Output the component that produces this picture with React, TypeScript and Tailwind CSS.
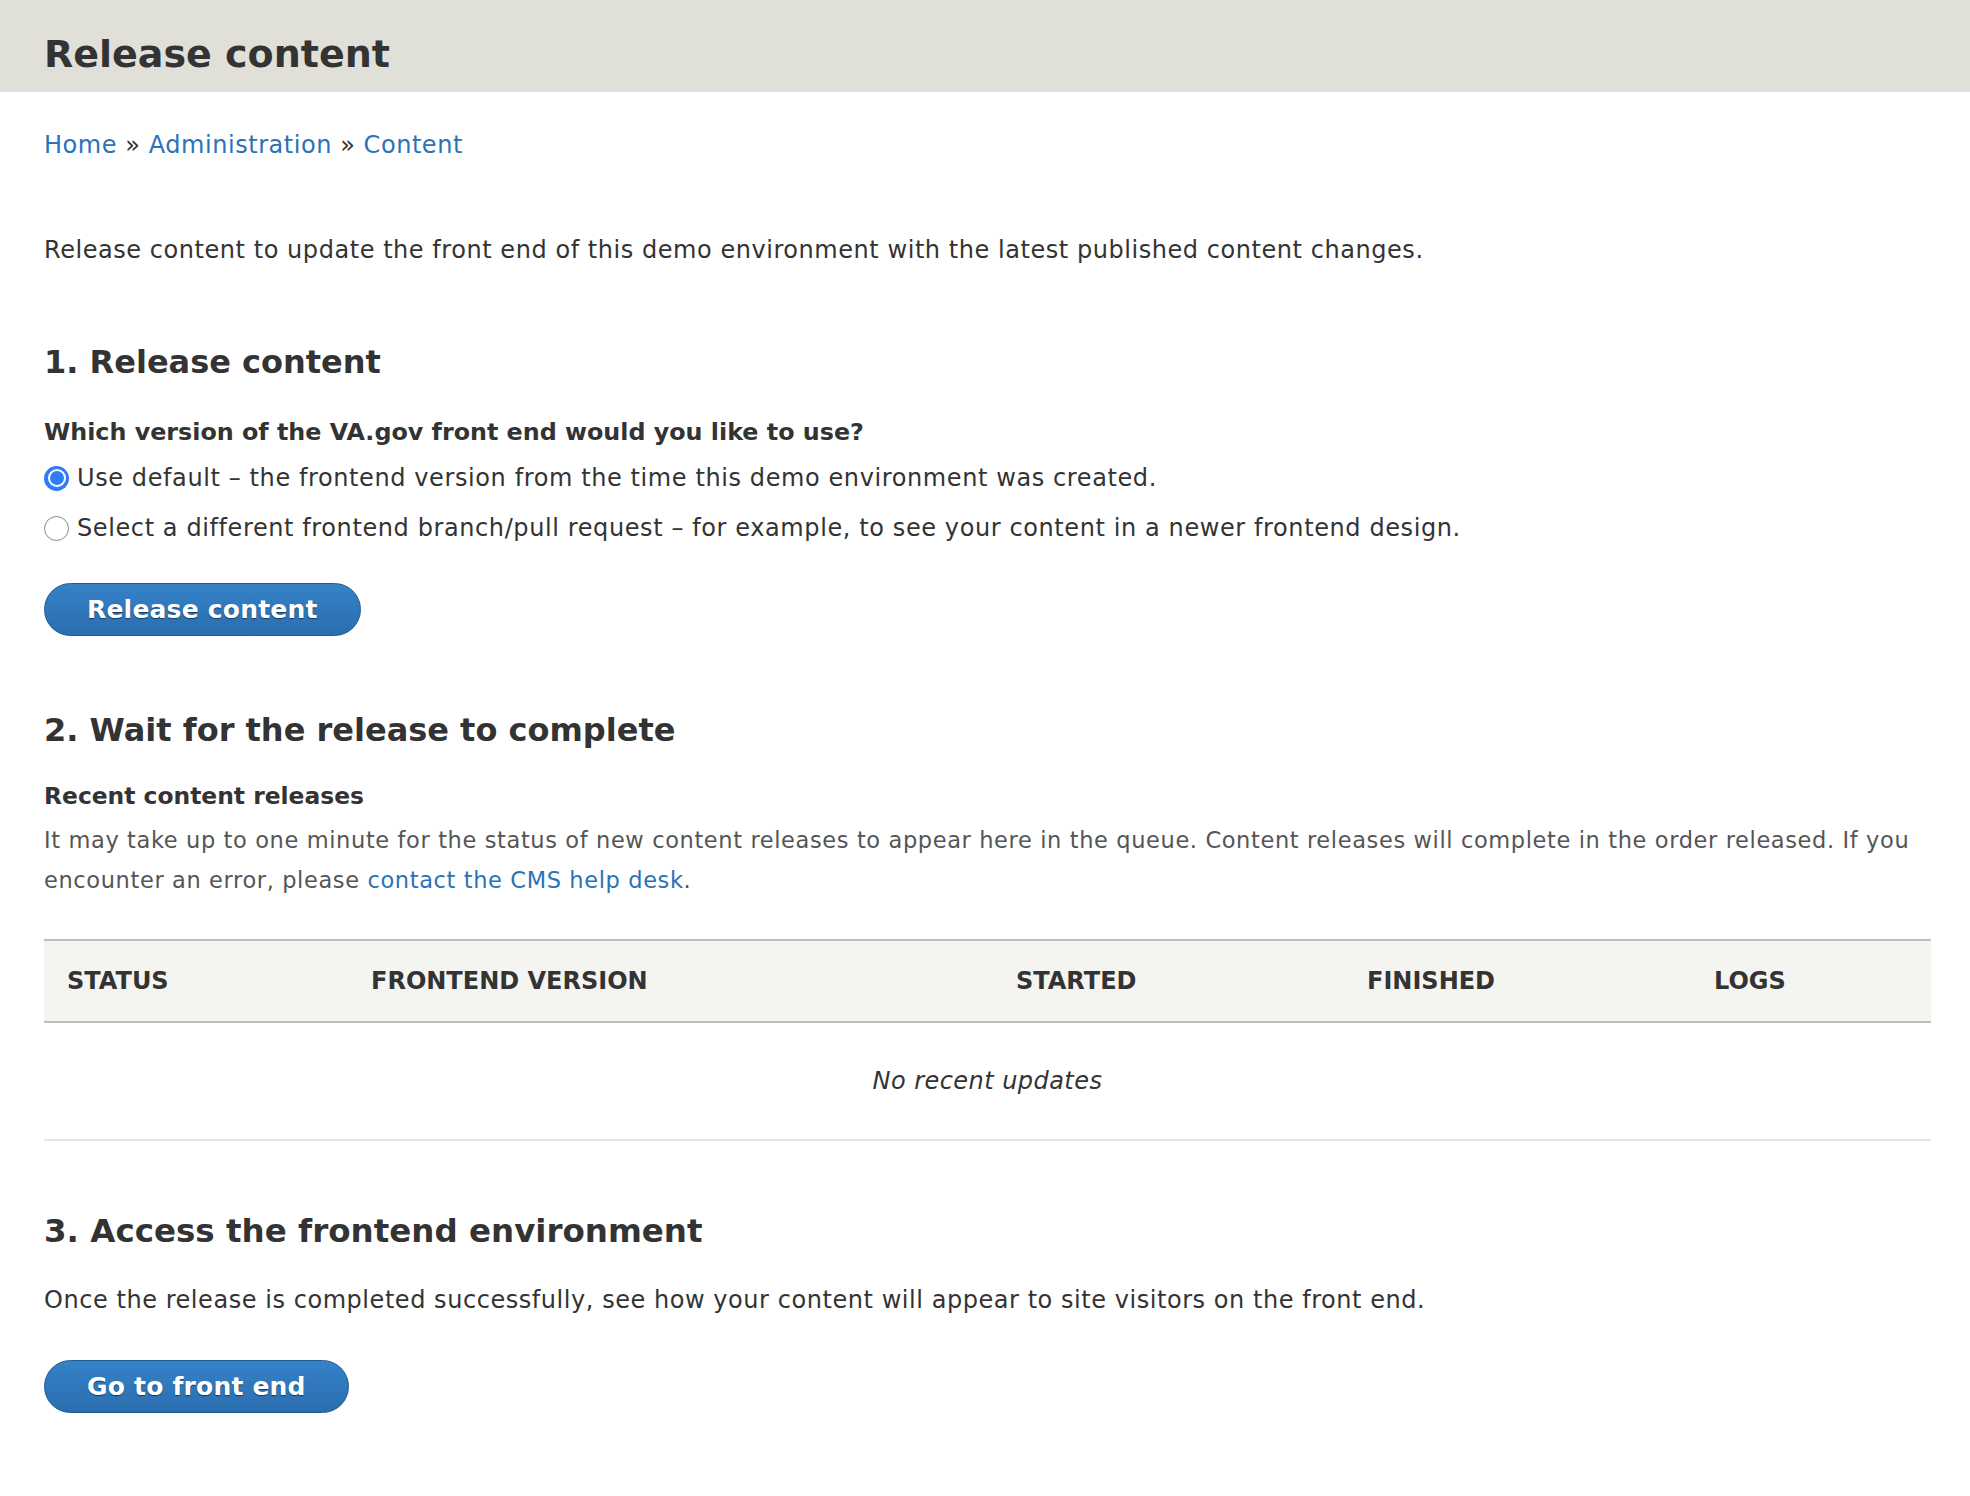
import React from "react";

const columns = [
  { label: "Status", width: "w-[304px]" },
  { label: "Frontend version", width: "w-[645px]" },
  { label: "Started", width: "w-[351px]" },
  { label: "Finished", width: "w-[347px]" },
  { label: "Logs", width: "" },
];

const Radio = ({ checked }: { checked: boolean }) =>
  checked ? (
    <span className="flex h-[25px] w-[25px] shrink-0 items-center justify-center rounded-full bg-[#2f7cf6]">
      <span className="flex h-[18px] w-[18px] items-center justify-center rounded-full bg-white">
        <span className="h-[14px] w-[14px] rounded-full bg-[#2f7cf6]" />
      </span>
    </span>
  ) : (
    <span className="h-[25px] w-[25px] shrink-0 rounded-full border-[1.5px] border-[#8a8a8a] bg-white" />
  );

const PrimaryButton = ({ children }: { children: React.ReactNode }) => (
  <button className="h-[53px] rounded-full border border-[#1e5c90] bg-gradient-to-b from-[#3482c7] to-[#2b6eaf] px-[42px] text-[25px] font-bold leading-none tracking-[0.2px] text-white [text-shadow:0_1px_1px_rgba(0,0,0,0.5)]">
    {children}
  </button>
);

export default function App() {
  return (
    <div className="min-h-[1496px] bg-white font-['DejaVu_Sans',sans-serif] text-[#333]">
      {/* page header */}
      <header className="h-[92px] bg-[#e0e0d8] pl-[44px] pt-[35px]">
        <h1 className="text-[38px] font-bold leading-[38px] text-[#333]">Release content</h1>
      </header>

      <main className="pl-[44px] pr-[39px]">
        {/* breadcrumb */}
        <nav className="mt-[35px] text-[24px] leading-[36px] tracking-[0.55px]">
          <a className="text-[#2a72ba]">Home</a> » <a className="text-[#2a72ba]">Administration</a> »{" "}
          <a className="text-[#2a72ba]">Content</a>
        </nav>

        <p className="mt-[69px] text-[24px] leading-[36px] tracking-[0.55px]">
          Release content to update the front end of this demo environment with the latest published content changes.
        </p>

        {/* step 1 */}
        <h2 className="mt-[74px] text-[32px] font-bold leading-[40px]">1. Release content</h2>
        <div className="mt-[32px] text-[23.8px] font-bold leading-[36px]">
          Which version of the VA.gov front end would you like to use?
        </div>
        <div className="mt-[10px] flex flex-col gap-[14px] text-[24px] leading-[36px] tracking-[0.6px]">
          <label className="flex items-center gap-[8px]">
            <Radio checked />
            <span>Use default – the frontend version from the time this demo environment was created.</span>
          </label>
          <label className="flex items-center gap-[8px]">
            <Radio checked={false} />
            <span>
              Select a different frontend branch/pull request – for example, to see your content in a newer frontend
              design.
            </span>
          </label>
        </div>
        <div className="mt-[37px]">
          <PrimaryButton>Release content</PrimaryButton>
        </div>

        {/* step 2 */}
        <h2 className="mt-[74px] text-[32px] font-bold leading-[40px]">2. Wait for the release to complete</h2>
        <h3 className="mt-[28px] text-[23.4px] font-bold leading-[36px]">Recent content releases</h3>
        <p className="mt-[6px] text-[22.5px] leading-[40px] tracking-[0.62px] text-[#555]">
          It may take up to one minute for the status of new content releases to appear here in the queue. Content
          releases will complete in the order released. If you
          <br />
          encounter an error, please <a className="text-[#2a72ba]">contact the CMS help desk</a>.
        </p>

        <table className="mt-[39px] w-full table-fixed border-collapse">
          <colgroup>
            {columns.map((c) => (
              <col key={c.label} className={c.width} />
            ))}
          </colgroup>
          <thead>
            <tr className="h-[82px] border-y-2 border-[#bfbfba] bg-[#f4f4f0]">
              {columns.map((c) => (
                <th key={c.label} className="pl-[23px] text-left text-[24px] font-bold uppercase text-[#333]">
                  {c.label}
                </th>
              ))}
            </tr>
          </thead>
          <tbody>
            <tr className="h-[118px] border-b-2 border-[#e6e5e0]">
              <td colSpan={5} className="text-center text-[24px] italic tracking-[0.45px] text-[#333]">
                No recent updates
              </td>
            </tr>
          </tbody>
        </table>

        {/* step 3 */}
        <h2 className="mt-[70px] text-[32.5px] font-bold leading-[40px]">3. Access the frontend environment</h2>
        <p className="mt-[31px] text-[24px] leading-[36px] tracking-[0.55px]">
          Once the release is completed successfully, see how your content will appear to site visitors on the front
          end.
        </p>
        <div className="mt-[42px]">
          <PrimaryButton>Go to front end</PrimaryButton>
        </div>
      </main>
    </div>
  );
}
